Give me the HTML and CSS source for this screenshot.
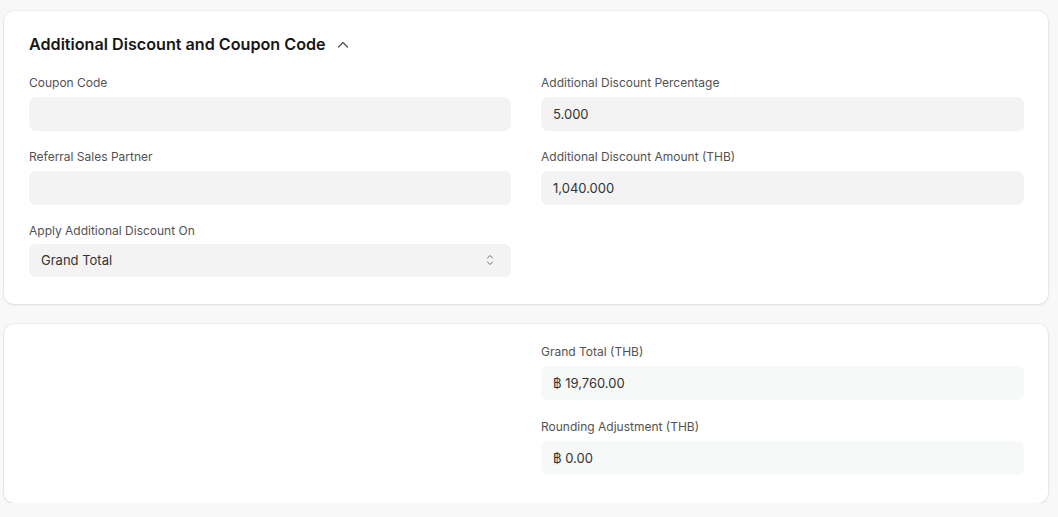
FILE: index.html
```html
<!DOCTYPE html>
<html lang="en">
<head>
<meta charset="utf-8">
<title>Additional Discount and Coupon Code</title>
<link rel="stylesheet" href="styles.css">
</head>
<body>
<div class="page">
  <section class="card card-discount">
    <div class="section-head">
      <h2 class="section-title">Additional Discount and Coupon Code</h2>
      <svg class="chevron" width="12" height="12" viewBox="0 0 12 12" aria-hidden="true"><path d="M1.5 8 L6 3.5 L10.5 8" fill="none" stroke="#525252" stroke-width="1.3" stroke-linecap="round" stroke-linejoin="round"/></svg>
    </div>
    <div class="grid">
      <div class="col">
        <div class="field">
          <label class="label">Coupon Code</label>
          <div class="control"></div>
        </div>
        <div class="field">
          <label class="label">Referral Sales Partner</label>
          <div class="control"></div>
        </div>
        <div class="field last">
          <label class="label">Apply Additional Discount On</label>
          <div class="control select">
            <span>Grand Total</span>
            <svg class="updown" width="10" height="14" viewBox="0 0 10 14" aria-hidden="true"><path d="M2.5 5 L5 2.5 L7.5 5 M2.5 9 L5 11.5 L7.5 9" fill="none" stroke="#6b6b6b" stroke-width="1" stroke-linecap="round" stroke-linejoin="round"/></svg>
          </div>
        </div>
      </div>
      <div class="col">
        <div class="field">
          <label class="label">Additional Discount Percentage</label>
          <div class="control">5.000</div>
        </div>
        <div class="field">
          <label class="label">Additional Discount Amount (THB)</label>
          <div class="control">1,040.000</div>
        </div>
      </div>
    </div>
  </section>

  <section class="card card-totals">
    <div class="grid">
      <div class="col"></div>
      <div class="col">
        <div class="field">
          <label class="label">Grand Total (THB)</label>
          <div class="control readonly">฿ 19,760.00</div>
        </div>
        <div class="field last">
          <label class="label">Rounding Adjustment (THB)</label>
          <div class="control readonly">฿ 0.00</div>
        </div>
      </div>
    </div>
  </section>
</div>
</body>
</html>
```

FILE: styles.css
```css
* { box-sizing: border-box; }
html, body { margin: 0; padding: 0; }
body {
  background: #f8f8f8;
  font-family: Inter, "Noto Sans", "DejaVu Sans", sans-serif;
  color: #1f272e;
}
.page {
  padding: 11px 10px 0 4px;
  display: flex;
  flex-direction: column;
  gap: 20px;
}
.card {
  background: #ffffff;
  border-radius: 10px;
  box-shadow: 0 0 0 1px rgba(0,0,0,0.035), 0 1px 3px rgba(0,0,0,0.08);
  padding: 0 24px 27px 25px;
}
.card-discount { padding-top: 22px; }
.card-totals { padding-top: 19px; padding-bottom: 28px; }
.section-head {
  display: flex;
  align-items: center;
  gap: 11px;
  height: 22px;
  margin-bottom: 19px;
}
.section-title {
  margin: 0;
  font-size: 16.15px;
  font-weight: 600;
  line-height: 22px;
  color: #171717;
}
.chevron { margin-top: 1px; }
.grid {
  display: grid;
  grid-template-columns: 482px 1fr;
  column-gap: 30px;
}
.col { display: flex; flex-direction: column; }
.field { display: flex; flex-direction: column; margin-bottom: 17px; }
.card-totals .field { margin-bottom: 18px; }
.field.last, .card-totals .field.last { margin-bottom: 0; }
.label {
  font-size: 12px;
  line-height: 17px;
  color: #525252;
  margin-bottom: 6px;
}
.control {
  height: 34px;
  border-radius: 7px;
  background: #f3f3f4;
  padding: 0 12px;
  display: flex;
  align-items: center;
  font-size: 13px;
  color: #333333;
}
.control.readonly { background: #f7f8f8; }
.select {
  justify-content: space-between;
  padding-right: 16px;
  height: 33px;
  margin-top: -1px;
  padding-bottom: 2px;
}
```
